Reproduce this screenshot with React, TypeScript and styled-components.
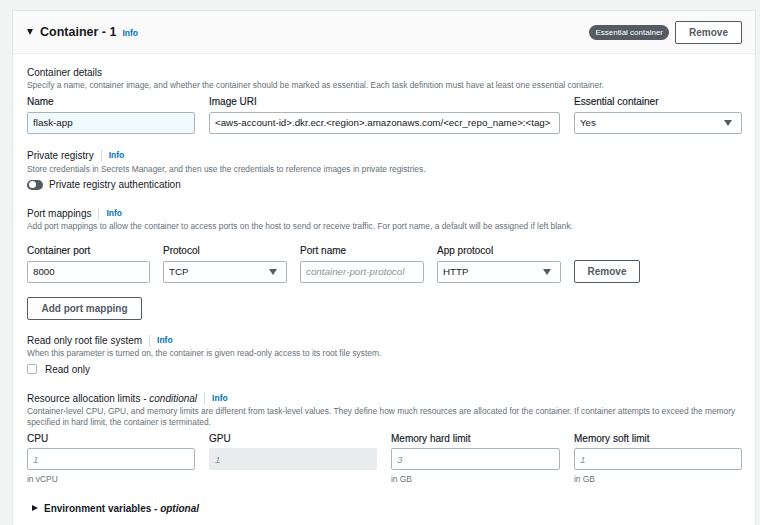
import React from "react";
import styled, { createGlobalStyle } from "styled-components";

const Global = createGlobalStyle`
  html, body { margin: 0; padding: 0; }
  body {
    background: #f2f3f3;
    font-family: "Liberation Sans", Arial, sans-serif;
    color: #16191f;
  }
`;

const Page = styled.div`
  padding: 10px 4px 0 12px;
  height: 525px;
  box-sizing: border-box;
  overflow: hidden;
`;

const Card = styled.div`
  background: #ffffff;
  border: 1px solid #e4e7e7;
  border-bottom: none;
  width: 744px;
  box-sizing: border-box;
  height: 520px;
`;

const Header = styled.div`
  height: 43px;
  background: #fafafa;
  border-bottom: 1px solid #eaeded;
  display: flex;
  align-items: center;
  justify-content: space-between;
  padding: 0 13px 0 14px;
  box-sizing: border-box;
`;

const HeaderLeft = styled.div`
  display: flex;
  align-items: center;
  gap: 7px;
`;

const HeaderRight = styled.div`
  display: flex;
  align-items: center;
  gap: 6px;
`;

const Caret = styled.span<{ $dir: "down" | "right" }>`
  display: inline-block;
  width: 0;
  height: 0;
  ${(p) =>
    p.$dir === "down"
      ? `border-left: 3.5px solid transparent; border-right: 3.5px solid transparent; border-top: 6px solid #16191f;`
      : `border-top: 3.5px solid transparent; border-bottom: 3.5px solid transparent; border-left: 6px solid #16191f;`}
`;

const Title = styled.h2`
  margin: 0;
  font-size: 12.5px;
  font-weight: 700;
  line-height: 16px;
  display: flex;
  align-items: baseline;
  gap: 6px;
`;

const InfoLink = styled.a`
  color: #0073bb;
  font-size: 8.5px;
  font-weight: 700;
  text-decoration: none;
`;

const Badge = styled.span`
  background: #545b64;
  color: #ffffff;
  font-size: 8px;
  line-height: 15px;
  height: 15px;
  padding: 0 6px;
  border-radius: 8px;
  white-space: nowrap;
`;

const Button = styled.button<{ $w?: number }>`
  font-family: inherit;
  height: 23px;
  ${(p) => (p.$w ? `width: ${p.$w}px;` : "padding: 0 12px;")}
  background: #ffffff;
  border: 1px solid #545b64;
  border-radius: 2px;
  color: #545b64;
  font-size: 10px;
  font-weight: 700;
  box-sizing: border-box;
  cursor: pointer;
`;

const Body = styled.div`
  padding: 12px 14px 0 14px;
`;

const Section = styled.div<{ $mt?: number }>`
  margin-top: ${(p) => p.$mt ?? 0}px;
`;

const SectionLabel = styled.div`
  font-size: 10px;
  line-height: 13px;
  display: flex;
  align-items: center;
`;

const Sep = styled.span`
  display: inline-block;
  width: 1px;
  height: 12px;
  background: #d5dbdb;
  margin: 0 7px;
`;

const Description = styled.div<{ $mt?: number }>`
  font-size: 8.4px;
  line-height: 11px;
  color: #687078;
  margin-top: ${(p) => p.$mt ?? 1}px;
`;

const Grid = styled.div<{ $cols: string; $gap: number; $mt?: number }>`
  display: grid;
  grid-template-columns: ${(p) => p.$cols};
  column-gap: ${(p) => p.$gap}px;
  align-items: end;
  margin-top: ${(p) => p.$mt ?? 0}px;
`;

const Field = styled.div`
  display: flex;
  flex-direction: column;
`;

const FieldLabel = styled.label`
  font-size: 10px;
  line-height: 13px;
  color: #16191f;
  margin-bottom: 3.5px;
  -webkit-text-stroke: 0.15px #16191f;
`;

const Input = styled.div<{ $tone?: "normal" | "filled" | "disabled"; $placeholder?: boolean }>`
  height: 22px;
  box-sizing: border-box;
  border: 1px solid ${(p) => (p.$tone === "disabled" ? "#eaeded" : "#aab7b8")};
  background: ${(p) =>
    p.$tone === "filled" ? "#f1faff" : p.$tone === "disabled" ? "#eaeded" : "#ffffff"};
  border-radius: 2px;
  padding: 0 5px;
  display: flex;
  align-items: center;
  font-size: ${(p) => (p.$placeholder ? "9.8px" : "9.75px")};
  color: ${(p) => (p.$placeholder ? "#879596" : "#16191f")};
  font-style: ${(p) => (p.$placeholder ? "italic" : "normal")};
  white-space: nowrap;
  overflow: hidden;
`;

const Select = styled(Input)`
  justify-content: space-between;
  padding-right: 9px;
`;

const Arrow = styled.span`
  width: 0;
  height: 0;
  border-left: 4px solid transparent;
  border-right: 4px solid transparent;
  border-top: 6px solid #545b64;
`;

const Hint = styled.div`
  font-size: 8.4px;
  line-height: 11px;
  color: #687078;
  margin-top: 3.5px;
`;

const ToggleRow = styled.label`
  display: flex;
  align-items: center;
  gap: 6px;
  font-size: 10px;
  line-height: 13px;
  margin-top: 3.5px;
`;

const Toggle = styled.span`
  width: 16px;
  height: 10px;
  border-radius: 5px;
  background: #545b64;
  position: relative;
  &::after {
    content: "";
    position: absolute;
    left: 1.5px;
    top: 1.5px;
    width: 7px;
    height: 7px;
    border-radius: 50%;
    background: #ffffff;
  }
`;

const Checkbox = styled.span`
  width: 10px;
  height: 10px;
  box-sizing: border-box;
  border: 1px solid #aab7b8;
  border-radius: 2px;
  background: #fff;
  margin-right: 2px;
`;

const Expander = styled.div`
  display: flex;
  align-items: center;
  gap: 6px;
  font-size: 10px;
  font-weight: 700;
  line-height: 13px;
  padding-left: 5px;
  margin-top: 17px;
`;

const Italic = styled.em`
  font-style: italic;
`;

export default function App() {
  return (
    <>
      <Global />
      <Page>
        <Card>
          <Header>
            <HeaderLeft>
              <Caret $dir="down" />
              <Title>
                Container - 1 <InfoLink>Info</InfoLink>
              </Title>
            </HeaderLeft>
            <HeaderRight>
              <Badge>Essential container</Badge>
              <Button $w={67}>Remove</Button>
            </HeaderRight>
          </Header>
          <Body>
            <Section>
              <SectionLabel>Container details</SectionLabel>
              <Description>
                Specify a name, container image, and whether the container should be marked as essential. Each task
                definition must have at least one essential container.
              </Description>
              <Grid $cols="168px 351px 168px" $gap={14} $mt={4}>
                <Field>
                  <FieldLabel>Name</FieldLabel>
                  <Input $tone="filled">flask-app</Input>
                </Field>
                <Field>
                  <FieldLabel>Image URI</FieldLabel>
                  <Input>{"<aws-account-id>.dkr.ecr.<region>.amazonaws.com/<ecr_repo_name>:<tag>"}</Input>
                </Field>
                <Field>
                  <FieldLabel>Essential container</FieldLabel>
                  <Select>
                    Yes <Arrow />
                  </Select>
                </Field>
              </Grid>
            </Section>

            <Section $mt={15.5}>
              <SectionLabel>
                Private registry <Sep /> <InfoLink>Info</InfoLink>
              </SectionLabel>
              <Description $mt={1.5}>
                Store credentials in Secrets Manager, and then use the credentials to reference images in private
                registries.
              </Description>
              <ToggleRow>
                <Toggle />
                Private registry authentication
              </ToggleRow>
            </Section>

            <Section $mt={16}>
              <SectionLabel>
                Port mappings <Sep /> <InfoLink>Info</InfoLink>
              </SectionLabel>
              <Description>
                Add port mappings to allow the container to access ports on the host to send or receive traffic. For
                port name, a default will be assigned if left blank.
              </Description>
              <Grid $cols="123px 124px 124px 124px 66px" $gap={13} $mt={12}>
                <Field>
                  <FieldLabel>Container port</FieldLabel>
                  <Input>8000</Input>
                </Field>
                <Field>
                  <FieldLabel>Protocol</FieldLabel>
                  <Select>
                    TCP <Arrow />
                  </Select>
                </Field>
                <Field>
                  <FieldLabel>Port name</FieldLabel>
                  <Input $placeholder>container-port-protocol</Input>
                </Field>
                <Field>
                  <FieldLabel>App protocol</FieldLabel>
                  <Select>
                    HTTP <Arrow />
                  </Select>
                </Field>
                <Button $w={66}>Remove</Button>
              </Grid>
              <Section $mt={14}>
                <Button $w={115}>Add port mapping</Button>
              </Section>
            </Section>

            <Section $mt={14.5}>
              <SectionLabel>
                Read only root file system <Sep /> <InfoLink>Info</InfoLink>
              </SectionLabel>
              <Description $mt={1}>
                When this parameter is turned on, the container is given read-only access to its root file system.
              </Description>
              <ToggleRow>
                <Checkbox />
                Read only
              </ToggleRow>
            </Section>

            <Section $mt={16}>
              <SectionLabel>
                Resource allocation limits -&nbsp;<Italic>conditional</Italic> <Sep /> <InfoLink>Info</InfoLink>
              </SectionLabel>
              <Description $mt={1.5}>
                Container-level CPU, GPU, and memory limits are different from task-level values. They define how much
                resources are allocated for the container. If container attempts to exceed the memory specified in hard
                limit, the container is terminated.
              </Description>
              <Grid $cols="168px 168px 169px 168px" $gap={14} $mt={3.5}>
                <Field>
                  <FieldLabel>CPU</FieldLabel>
                  <Input $placeholder>1</Input>
                  <Hint>in vCPU</Hint>
                </Field>
                <Field>
                  <FieldLabel>GPU</FieldLabel>
                  <Input $placeholder $tone="disabled">1</Input>
                  <Hint>&nbsp;</Hint>
                </Field>
                <Field>
                  <FieldLabel>Memory hard limit</FieldLabel>
                  <Input $placeholder>3</Input>
                  <Hint>in GB</Hint>
                </Field>
                <Field>
                  <FieldLabel>Memory soft limit</FieldLabel>
                  <Input $placeholder>1</Input>
                  <Hint>in GB</Hint>
                </Field>
              </Grid>
            </Section>

            <Expander>
              <Caret $dir="right" />
              <span>
                Environment variables - <Italic>optional</Italic>
              </span>
            </Expander>
          </Body>
        </Card>
      </Page>
    </>
  );
}
